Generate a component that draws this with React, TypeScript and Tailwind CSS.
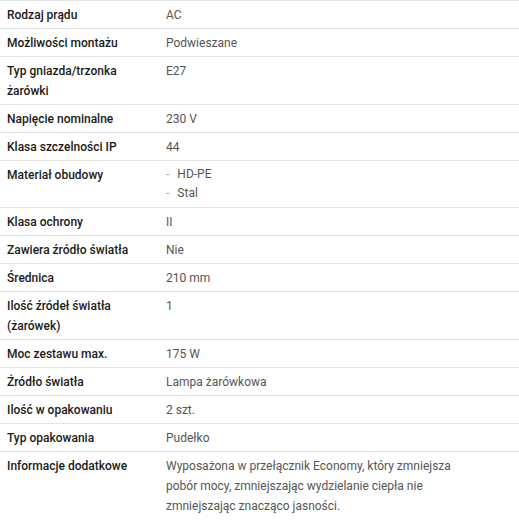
import React from "react";

const rows: [string, string | string[]][] = [
  ["Rodzaj prądu", "AC"],
  ["Możliwości montażu", "Podwieszane"],
  ["Typ gniazda/trzonka żarówki", "E27"],
  ["Napięcie nominalne", "230 V"],
  ["Klasa szczelności IP", "44"],
  ["Materiał obudowy", ["HD-PE", "Stal"]],
  ["Klasa ochrony", "II"],
  ["Zawiera źródło światła", "Nie"],
  ["Średnica", "210 mm"],
  ["Ilość źródeł światła (żarówek)", "1"],
  ["Moc zestawu max.", "175 W"],
  ["Źródło światła", "Lampa żarówkowa"],
  ["Ilość w opakowaniu", "2 szt."],
  ["Typ opakowania", "Pudełko"],
  [
    "Informacje dodatkowe",
    "Wyposażona w przełącznik Economy, który zmniejsza pobór mocy, zmniejszając wydzielanie ciepła nie zmniejszając znacząco jasności.",
  ],
];

const App = () => {
  return (
    <div className="w-[519px] bg-white font-['Roboto',sans-serif] text-[12px] leading-[20px]">
      {rows.map(([label, value], i) => (
        <div
          className="grid grid-cols-[166px_1fr] border-t border-[#e4e4e7] pt-1 pb-[3px]"
          key={i}
        >
          <div className="pl-[7px] pr-3 font-medium text-[#1a1a1a]">
            {label}
          </div>
          <div className="pr-[50px] text-[#555]">
            {Array.isArray(value) ? (
              <ul className="leading-[19px] pb-px">
                {value.map((v) => (
                  <li className="flex gap-2" key={v}>
                    <span className="text-[#aaa]">-</span>
                    <span>{v}</span>
                  </li>
                ))}
              </ul>
            ) : (
              value
            )}
          </div>
        </div>
      ))}
    </div>
  );
};

export default App;
